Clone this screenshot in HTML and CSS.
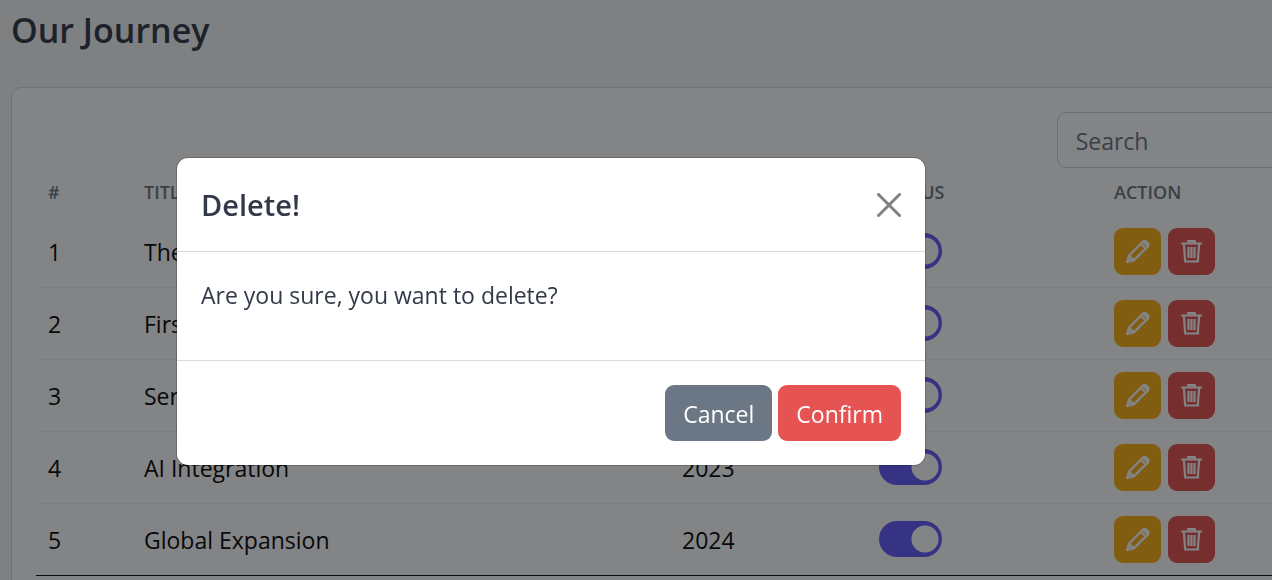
FILE: index.html
```html
<!DOCTYPE html>
<html lang="en">
<head>
    <meta charset="UTF-8">
    <meta name="viewport" content="width=device-width, initial-scale=1.0">
    <title>Our Journey</title>
    <link rel="stylesheet" href="styles.css">
</head>
<body>
    <!-- Icons -->
    <svg class="icon-defs" aria-hidden="true">
        <symbol id="icon-pencil" viewBox="0 0 24 24">
            <path d="M1.4 21.6 3 15.6 16.8 1.8a2.6 2.6 0 0 1 3.7 0l1.2 1.2a2.6 2.6 0 0 1 0 3.7L7.8 20.4Z M3 15.6l4.8 4.8 M14.8 3.8l4.9 4.9 M17.2 1.8l4.6 4.6"/>
            <path d="M1.4 21.6l.8-3 2.2 2.2Z"/>
        </symbol>
        <symbol id="icon-trash" viewBox="0 0 24 24">
            <path d="M1.2 3.5h20.6 M3.8 3.5l1.4 18h12.6l1.4-18 M8.3 3.2V1.2h6.4v2"/>
            <path d="M8.5 7v11 M11.5 7v11 M14.5 7v11"/>
        </symbol>
    </svg>

    <div class="page">
        <h1>Our Journey</h1>

        <div class="card">
            <div class="toolbar">
                <input type="text" class="search" placeholder="Search" aria-label="Search">
            </div>

            <table class="journey-table">
                <thead>
                    <tr>
                        <th class="col-number">#</th>
                        <th class="col-title">Title</th>
                        <th class="col-year">Year</th>
                        <th class="col-status">Status</th>
                        <th>Action</th>
                    </tr>
                </thead>
                <tbody>
                    <tr>
                        <td>1</td>
                        <td>The Beginning</td>
                        <td>2020</td>
                        <td><input type="checkbox" class="switch" aria-label="Status 1" checked></td>
                        <td>
                            <div class="actions">
                                <button type="button" class="btn-icon btn-edit" aria-label="Edit"><svg><use href="#icon-pencil"/></svg></button>
                                <button type="button" class="btn-icon btn-delete" aria-label="Delete"><svg><use href="#icon-trash"/></svg></button>
                            </div>
                        </td>
                    </tr>
                    <tr>
                        <td>2</td>
                        <td>First Product</td>
                        <td>2021</td>
                        <td><input type="checkbox" class="switch" aria-label="Status 2" checked></td>
                        <td>
                            <div class="actions">
                                <button type="button" class="btn-icon btn-edit" aria-label="Edit"><svg><use href="#icon-pencil"/></svg></button>
                                <button type="button" class="btn-icon btn-delete" aria-label="Delete"><svg><use href="#icon-trash"/></svg></button>
                            </div>
                        </td>
                    </tr>
                    <tr>
                        <td>3</td>
                        <td>Series A</td>
                        <td>2022</td>
                        <td><input type="checkbox" class="switch" aria-label="Status 3" checked></td>
                        <td>
                            <div class="actions">
                                <button type="button" class="btn-icon btn-edit" aria-label="Edit"><svg><use href="#icon-pencil"/></svg></button>
                                <button type="button" class="btn-icon btn-delete" aria-label="Delete"><svg><use href="#icon-trash"/></svg></button>
                            </div>
                        </td>
                    </tr>
                    <tr>
                        <td>4</td>
                        <td>AI Integration</td>
                        <td>2023</td>
                        <td><input type="checkbox" class="switch" aria-label="Status 4" checked></td>
                        <td>
                            <div class="actions">
                                <button type="button" class="btn-icon btn-edit" aria-label="Edit"><svg><use href="#icon-pencil"/></svg></button>
                                <button type="button" class="btn-icon btn-delete" aria-label="Delete"><svg><use href="#icon-trash"/></svg></button>
                            </div>
                        </td>
                    </tr>
                    <tr>
                        <td>5</td>
                        <td>Global Expansion</td>
                        <td>2024</td>
                        <td><input type="checkbox" class="switch" aria-label="Status 5" checked></td>
                        <td>
                            <div class="actions">
                                <button type="button" class="btn-icon btn-edit" aria-label="Edit"><svg><use href="#icon-pencil"/></svg></button>
                                <button type="button" class="btn-icon btn-delete" aria-label="Delete"><svg><use href="#icon-trash"/></svg></button>
                            </div>
                        </td>
                    </tr>
                </tbody>
            </table>
        </div>
    </div>

    <!-- Delete confirmation -->
    <div class="modal-backdrop">
        <div class="modal" role="dialog" aria-modal="true" aria-labelledby="modal-title">
            <div class="modal-header">
                <h2 id="modal-title">Delete!</h2>
                <button type="button" class="btn-close" aria-label="Close">
                    <svg viewBox="0 0 24 24"><path d="M1.5 1.5l21 21 M22.5 1.5l-21 21"/></svg>
                </button>
            </div>
            <div class="modal-body">
                <p>Are you sure, you want to delete?</p>
            </div>
            <div class="modal-footer">
                <button type="button" class="btn btn-secondary">Cancel</button>
                <button type="button" class="btn btn-danger">Confirm</button>
            </div>
        </div>
    </div>
</body>
</html>
```
FILE: styles.css
```css
* {
    box-sizing: border-box;
}
body {
    margin: 0;
    height: 100vh;
    overflow: hidden;
    font-family: "Open Sans", "Noto Sans", sans-serif;
    font-size: 23px;
    line-height: 36px;
    color: #323a49;
    background-color: #f4f6f8;
}
h1, h2, p {
    margin: 0;
}
button, input {
    font: inherit;
}
.icon-defs {
    display: none;
}

/* the page is wider than the window, its right side is cut off */
.page {
    width: 112%;
    padding: 8px 11px;
}
h1 {
    margin-bottom: 35px;
    font-size: 34px;
    font-weight: 600;
    line-height: 44px;
}
.card {
    padding: 24px;
    background: white;
    border: 1px solid #d8dbe0;
    border-radius: 10px;
}
.toolbar {
    display: flex;
    justify-content: flex-end;
}
.search {
    width: 332px;
    height: 56px;
    padding: 10px 18px 8px;
    color: #323a49;
    background: transparent;
    border: 1px solid #d0d3da;
    border-radius: 9px;
}
.search::placeholder {
    color: #6b7785;
    opacity: 1;
}

.journey-table {
    width: 100%;
    table-layout: fixed;
    border-collapse: separate;
    border-spacing: 0;
    color: #080808;
}
.journey-table th {
    height: 48px;
    padding: 0 12px;
    font-size: 18px;
    font-weight: 600;
    text-align: left;
    text-transform: uppercase;
    color: #6b7785;
}
.journey-table td {
    height: 72px;
    padding: 0 12px;
    border-bottom: 1px solid #eeeff1;
}
.journey-table tr:last-child td {
    border-bottom-color: #080808;
}
.col-number {
    width: 96px;
}
.col-title {
    width: 538px;
}
.col-year {
    width: 197px;
}
.col-status {
    width: 235px;
}

.switch {
    display: block;
    appearance: none;
    width: 63px;
    height: 36px;
    margin: 0 0 1px;
    border-radius: 18px;
    background: radial-gradient(circle at 46px 18px, white 13px, #655bfd 14px);
}
.actions {
    display: flex;
    gap: 7px;
}
.btn-icon {
    display: flex;
    align-items: center;
    justify-content: center;
    width: 47px;
    height: 47px;
    padding: 0;
    border: none;
    border-radius: 9px;
}
.btn-icon svg {
    width: 24px;
    height: 24px;
    fill: none;
    stroke: white;
    stroke-width: 2.2;
}
.btn-edit {
    background: #f9b115;
}
.btn-delete {
    background: #e55353;
}

.modal-backdrop {
    position: fixed;
    inset: 0;
    display: flex;
    align-items: flex-start;
    justify-content: center;
    padding: 158px 170px 0 0;
    background: rgba(8, 10, 12, 0.5);
}
.modal {
    width: 748px;
    background: white;
    border-radius: 11px;
    box-shadow: 0 0 0 1px rgba(0, 0, 0, 0.2);
}
.modal-header {
    display: flex;
    align-items: center;
    justify-content: space-between;
    padding: 24px;
    border-bottom: 1px solid #d8dbe0;
}
.modal-header h2 {
    font-size: 29px;
    font-weight: 600;
    line-height: 45px;
}
.btn-close {
    display: flex;
    padding: 0;
    border: none;
    background: none;
}
.btn-close svg {
    width: 24px;
    height: 24px;
    fill: none;
    stroke: #808080;
    stroke-width: 3;
    stroke-linecap: round;
}
.modal-body {
    padding: 25px 24px 47px;
}
.modal-footer {
    display: flex;
    justify-content: flex-end;
    gap: 6px;
    padding: 24px;
    border-top: 1px solid #d8dbe0;
}
.btn {
    padding: 11px 18px 9px;
    border: none;
    border-radius: 9px;
    color: white;
}
.btn-secondary {
    background: #6b7785;
}
.btn-danger {
    background: #e55353;
}
```
